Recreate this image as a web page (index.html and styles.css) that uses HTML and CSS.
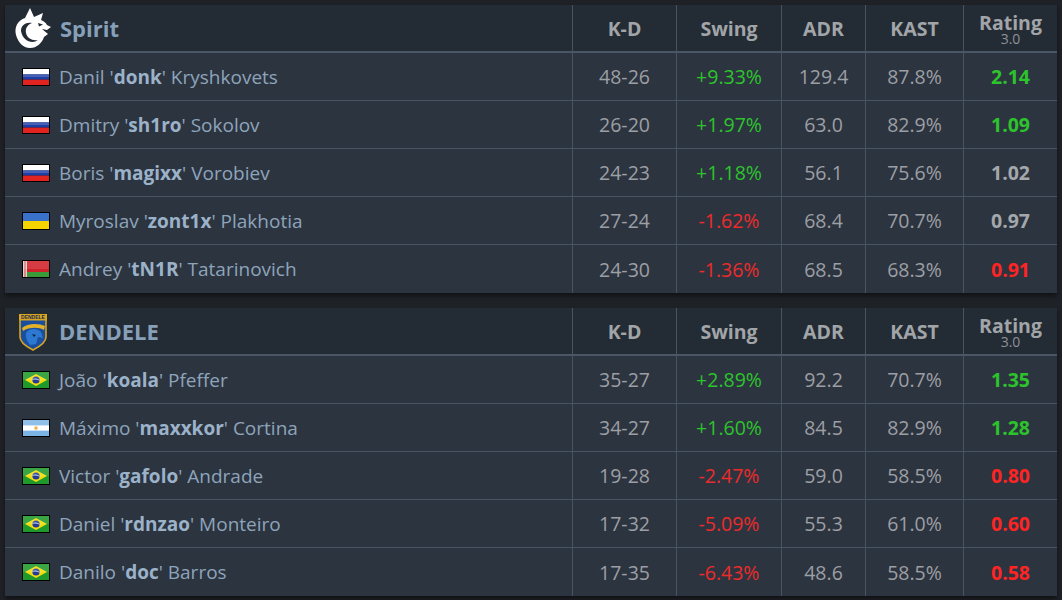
FILE: index.html
```html
<!DOCTYPE html>
<html>
<head>
<meta charset="utf-8">
<link rel="stylesheet" href="styles.css">
</head>
<body>
<div class="page">

<div class="team">
  <div class="row head">
    <div class="cell name">
      <svg class="logo slogo" viewBox="0 0 44 46" width="44" height="46">
        <path fill="#fff" fill-rule="evenodd" d="M6 30 C4 22 8 15 15 13 L20 3 L24 12 L33 8 L31 15 C34 16 36 18 37 20 L41 22 L37 25 L32 24 L38 29 L34 32 C32 38 27 43 20 43 C13 43 8 37 6 30 Z M11 26 C11 20 16 17 22 18 C17 20 15 24 16 28 C17 33 22 36 28 35 C23 39 13 37 11 26 Z M28 18 L33 19.5 L29 21.5 Z"/>
      </svg>
      <span class="tname">Spirit</span>
    </div>
    <div class="cell">K-D</div>
    <div class="cell">Swing</div>
    <div class="cell">ADR</div>
    <div class="cell">KAST</div>
    <div class="cell rating"><span>Rating</span><small>3.0</small></div>
  </div>
  <div class="row">
    <div class="cell name"><svg class="flag" viewBox="0 0 28 18"><rect width="28" height="18" fill="#000"/><rect x="1" y="1" width="26" height="5.4" fill="#fff"/><rect x="1" y="6.3" width="26" height="5.4" fill="#1c3fa8"/><rect x="1" y="11.6" width="26" height="5.4" fill="#e0231f"/><rect x="1" y="1" width="26" height="8" fill="#fff" opacity=".18"/></svg><span>Danil '<b>donk</b>' Kryshkovets</span></div>
    <div class="cell">48-26</div>
    <div class="cell pos">+9.33%</div>
    <div class="cell">129.4</div>
    <div class="cell">87.8%</div>
    <div class="cell rt good">2.14</div>
  </div>
  <div class="row">
    <div class="cell name"><svg class="flag" viewBox="0 0 28 18"><rect width="28" height="18" fill="#000"/><rect x="1" y="1" width="26" height="5.4" fill="#fff"/><rect x="1" y="6.3" width="26" height="5.4" fill="#1c3fa8"/><rect x="1" y="11.6" width="26" height="5.4" fill="#e0231f"/><rect x="1" y="1" width="26" height="8" fill="#fff" opacity=".18"/></svg><span>Dmitry '<b>sh1ro</b>' Sokolov</span></div>
    <div class="cell">26-20</div>
    <div class="cell pos">+1.97%</div>
    <div class="cell">63.0</div>
    <div class="cell">82.9%</div>
    <div class="cell rt good">1.09</div>
  </div>
  <div class="row">
    <div class="cell name"><svg class="flag" viewBox="0 0 28 18"><rect width="28" height="18" fill="#000"/><rect x="1" y="1" width="26" height="5.4" fill="#fff"/><rect x="1" y="6.3" width="26" height="5.4" fill="#1c3fa8"/><rect x="1" y="11.6" width="26" height="5.4" fill="#e0231f"/><rect x="1" y="1" width="26" height="8" fill="#fff" opacity=".18"/></svg><span>Boris '<b>magixx</b>' Vorobiev</span></div>
    <div class="cell">24-23</div>
    <div class="cell pos">+1.18%</div>
    <div class="cell">56.1</div>
    <div class="cell">75.6%</div>
    <div class="cell rt">1.02</div>
  </div>
  <div class="row">
    <div class="cell name"><svg class="flag" viewBox="0 0 28 18"><rect width="28" height="18" fill="#000"/><rect x="1" y="1" width="26" height="8" fill="#1f5fc4"/><rect x="1" y="9" width="26" height="8" fill="#f5d300"/><rect x="1" y="1" width="26" height="8" fill="#fff" opacity=".12"/></svg><span>Myroslav '<b>zont1x</b>' Plakhotia</span></div>
    <div class="cell">27-24</div>
    <div class="cell neg">-1.62%</div>
    <div class="cell">68.4</div>
    <div class="cell">70.7%</div>
    <div class="cell rt">0.97</div>
  </div>
  <div class="row">
    <div class="cell name"><svg class="flag" viewBox="0 0 28 18"><rect width="28" height="18" fill="#000"/><rect x="1" y="1" width="26" height="11" fill="#d0202a"/><rect x="1" y="12" width="26" height="5" fill="#3a9a3a"/><rect x="1" y="1" width="4" height="16" fill="#e8d0d0"/><rect x="2.5" y="1" width="1" height="16" fill="#c83a3a"/><rect x="1" y="1" width="26" height="8" fill="#fff" opacity=".12"/></svg><span>Andrey '<b>tN1R</b>' Tatarinovich</span></div>
    <div class="cell">24-30</div>
    <div class="cell neg">-1.36%</div>
    <div class="cell">68.5</div>
    <div class="cell">68.3%</div>
    <div class="cell rt bad">0.91</div>
  </div>
</div>

<div class="team">
  <div class="row head">
    <div class="cell name">
      <svg class="logo dlogo" viewBox="0 0 32 40" width="32" height="40">
        <path d="M3 8 L16 4 L29 8 L29 26 C29 32 22 36 16 39 C10 36 3 32 3 26 Z" fill="#1a4fa0" stroke="#d8a520" stroke-width="1.6"/>
        <path d="M5 17 C10 12 22 12 28 15 L27 19 C22 16 12 16 6 20 Z" fill="#e2b12a"/>
        <path d="M9 22 C12 17 20 17 24 21 L26 27 L21 26 L19 33 L13 34 C10 30 8 26 9 22 Z" fill="#2d78d0"/>
        <path d="M15 23 L19 24 L17 26 Z" fill="#0d2450"/>
        <path d="M2 3 L30 3 L30 9.5 L2 9.5 Z" fill="#d8a520"/>
        <text x="16" y="8.3" text-anchor="middle" class="logotext">DENDELE</text>
      </svg>
      <span class="tname">DENDELE</span>
    </div>
    <div class="cell">K-D</div>
    <div class="cell">Swing</div>
    <div class="cell">ADR</div>
    <div class="cell">KAST</div>
    <div class="cell rating"><span>Rating</span><small>3.0</small></div>
  </div>
  <div class="row">
    <div class="cell name"><svg class="flag" viewBox="0 0 28 18"><rect width="28" height="18" fill="#000"/><rect x="1" y="1" width="26" height="16" fill="#1f9a2a"/><path d="M14 3 L25 9 L14 15 L3 9 Z" fill="#f3dc10"/><circle cx="14" cy="9" r="3.6" fill="#1f3d9a"/><path d="M10.6 8.4 C13 7.6 15.5 8 17.4 9.4" stroke="#fff" stroke-width=".7" fill="none"/><rect x="1" y="1" width="26" height="8" fill="#fff" opacity=".12"/></svg><span>João '<b>koala</b>' Pfeffer</span></div>
    <div class="cell">35-27</div>
    <div class="cell pos">+2.89%</div>
    <div class="cell">92.2</div>
    <div class="cell">70.7%</div>
    <div class="cell rt good">1.35</div>
  </div>
  <div class="row">
    <div class="cell name"><svg class="flag" viewBox="0 0 28 18"><rect width="28" height="18" fill="#000"/><rect x="1" y="1" width="26" height="16" fill="#fff"/><rect x="1" y="1" width="26" height="5.4" fill="#7db4e6"/><rect x="1" y="11.6" width="26" height="5.4" fill="#7db4e6"/><circle cx="14" cy="9" r="1.7" fill="#f0a830"/><rect x="1" y="1" width="26" height="8" fill="#fff" opacity=".15"/></svg><span>Máximo '<b>maxxkor</b>' Cortina</span></div>
    <div class="cell">34-27</div>
    <div class="cell pos">+1.60%</div>
    <div class="cell">84.5</div>
    <div class="cell">82.9%</div>
    <div class="cell rt good">1.28</div>
  </div>
  <div class="row">
    <div class="cell name"><svg class="flag" viewBox="0 0 28 18"><rect width="28" height="18" fill="#000"/><rect x="1" y="1" width="26" height="16" fill="#1f9a2a"/><path d="M14 3 L25 9 L14 15 L3 9 Z" fill="#f3dc10"/><circle cx="14" cy="9" r="3.6" fill="#1f3d9a"/><path d="M10.6 8.4 C13 7.6 15.5 8 17.4 9.4" stroke="#fff" stroke-width=".7" fill="none"/><rect x="1" y="1" width="26" height="8" fill="#fff" opacity=".12"/></svg><span>Victor '<b>gafolo</b>' Andrade</span></div>
    <div class="cell">19-28</div>
    <div class="cell neg">-2.47%</div>
    <div class="cell">59.0</div>
    <div class="cell">58.5%</div>
    <div class="cell rt bad">0.80</div>
  </div>
  <div class="row">
    <div class="cell name"><svg class="flag" viewBox="0 0 28 18"><rect width="28" height="18" fill="#000"/><rect x="1" y="1" width="26" height="16" fill="#1f9a2a"/><path d="M14 3 L25 9 L14 15 L3 9 Z" fill="#f3dc10"/><circle cx="14" cy="9" r="3.6" fill="#1f3d9a"/><path d="M10.6 8.4 C13 7.6 15.5 8 17.4 9.4" stroke="#fff" stroke-width=".7" fill="none"/><rect x="1" y="1" width="26" height="8" fill="#fff" opacity=".12"/></svg><span>Daniel '<b>rdnzao</b>' Monteiro</span></div>
    <div class="cell">17-32</div>
    <div class="cell neg">-5.09%</div>
    <div class="cell">55.3</div>
    <div class="cell">61.0%</div>
    <div class="cell rt bad">0.60</div>
  </div>
  <div class="row">
    <div class="cell name"><svg class="flag" viewBox="0 0 28 18"><rect width="28" height="18" fill="#000"/><rect x="1" y="1" width="26" height="16" fill="#1f9a2a"/><path d="M14 3 L25 9 L14 15 L3 9 Z" fill="#f3dc10"/><circle cx="14" cy="9" r="3.6" fill="#1f3d9a"/><path d="M10.6 8.4 C13 7.6 15.5 8 17.4 9.4" stroke="#fff" stroke-width=".7" fill="none"/><rect x="1" y="1" width="26" height="8" fill="#fff" opacity=".12"/></svg><span>Danilo '<b>doc</b>' Barros</span></div>
    <div class="cell">17-35</div>
    <div class="cell neg">-6.43%</div>
    <div class="cell">48.6</div>
    <div class="cell">58.5%</div>
    <div class="cell rt bad">0.58</div>
  </div>
</div>

</div>
</body>
</html>
```

FILE: styles.css
```css
html, body {
  margin: 0;
  padding: 0;
  background: #1e2126;
}
.page {
  padding: 5px;
  display: flex;
  flex-direction: column;
  gap: 15px;
  font-family: "Open Sans", "Noto Sans", sans-serif;
}
.team {
  width: 1052px;
  background: #2c3440;
  box-shadow: 0 3px 4px rgba(0,0,0,0.45);
}
.row {
  display: grid;
  grid-template-columns: 567px 104px 105px 84px 98px 94px;
  height: 48px;
  box-sizing: border-box;
  border-bottom: 1px solid #485462;
}
.row:last-child {
  border-bottom: none;
}
.row.head {
  background: #232b35;
  border-bottom: 2px solid #4a5666;
}
.cell {
  display: flex;
  align-items: center;
  justify-content: center;
  border-left: 1px solid #485462;
  font-size: 19.5px;
  color: #9c9fa3;
}
.cell.name {
  border-left: none;
  justify-content: flex-start;
  padding-left: 17px;
  font-size: 19px;
  color: #8ea4bb;
}
.head .cell {
  font-weight: 700;
  color: #a2a5a8;
}
.head .cell.name {
  padding-left: 5px;
}
.logo {
  display: block;
}
.slogo {
  margin-right: 6px;
}
.dlogo {
  margin-left: 7px;
  margin-right: 10px;
}
.logotext {
  font-family: "Liberation Sans", sans-serif;
  font-size: 5px;
  font-weight: 700;
  fill: #1a2a50;
}
.tname {
  font-size: 22px;
  font-weight: 700;
  color: #87a0ba;
}
.flag {
  width: 28px;
  height: 18px;
  display: block;
  margin-right: 9px;
}
.name b {
  font-weight: 700;
  color: #9bb2c9;
}
.rating {
  flex-direction: column;
  padding-top: 4px;
}
.rating span {
  line-height: 18px;
}
.rating small {
  font-size: 14px;
  line-height: 14px;
  font-weight: 400;
  color: #8f9296;
}
.pos {
  color: #2cc32c;
}
.neg {
  color: #ec2b2b;
}
.rt {
  font-weight: 700;
  color: #a5a8ab;
}
.rt.good {
  color: #2cc32c;
}
.rt.bad {
  color: #ff2424;
}
```
